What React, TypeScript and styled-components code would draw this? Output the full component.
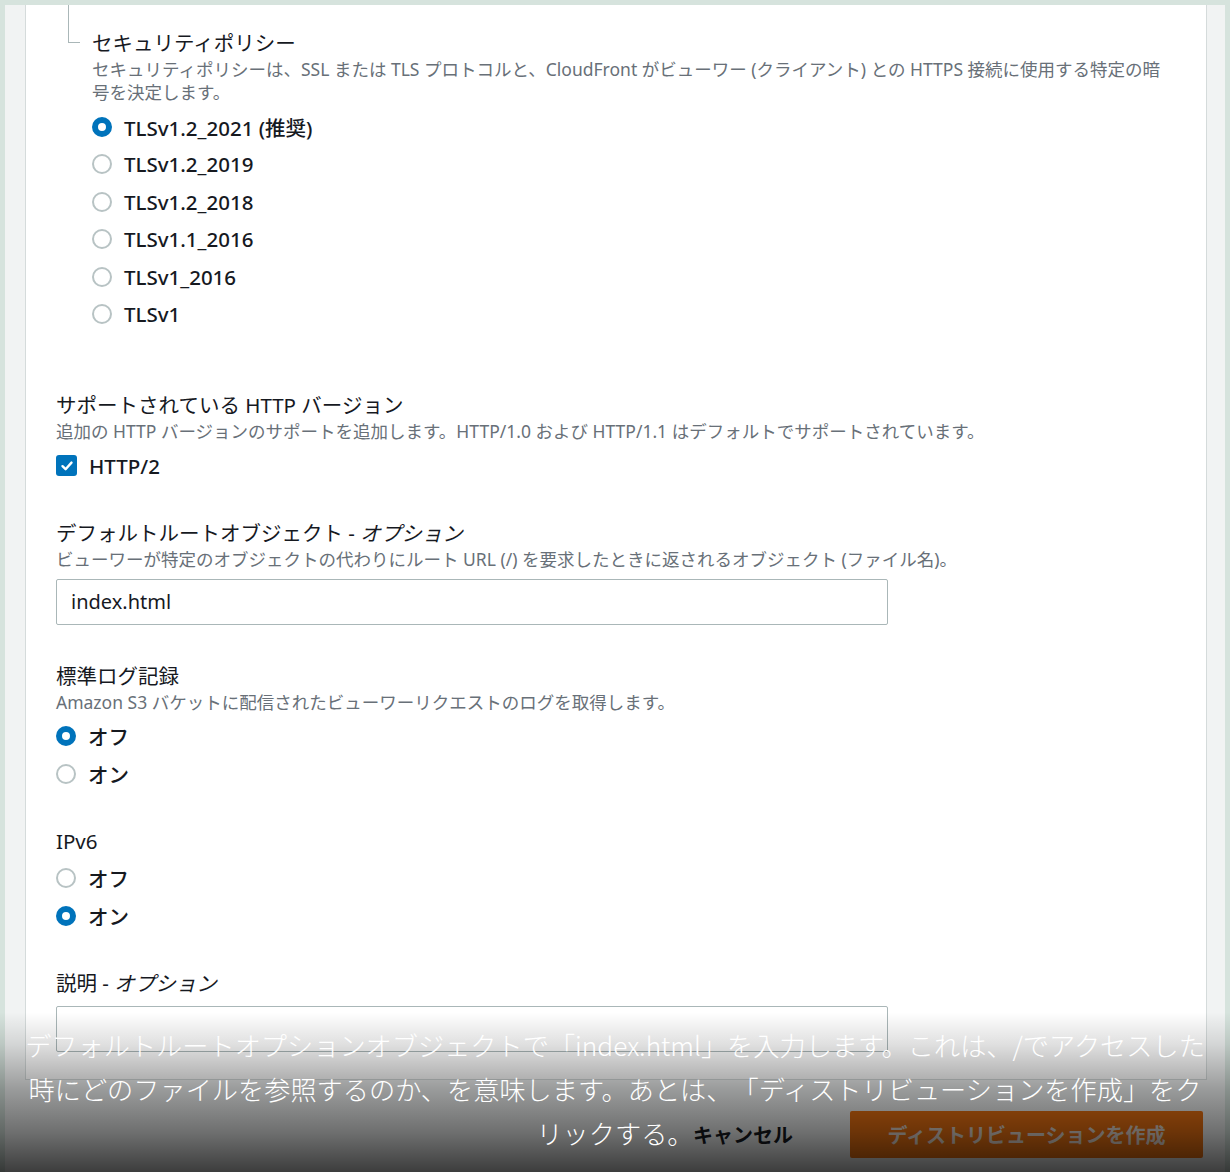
import React from 'react'
import styled, { createGlobalStyle } from 'styled-components'

const GlobalStyle = createGlobalStyle`
  html, body {
    margin: 0;
    padding: 0;
  }
  body {
    font-family: "Noto Sans", "Noto Sans CJK JP", sans-serif;
    color: #16191f;
  }
`

const Screen = styled.div`
  position: relative;
  width: 1230px;
  height: 1172px;
  overflow: hidden;
  box-sizing: border-box;
  padding: 5px 5px 0 5px;
  background: #d6e3dd;
`

const Page = styled.div`
  height: 100%;
  padding: 0 18px 0 20px;
  background: #f1f3f3;
`

const Panel = styled.div`
  display: flex;
  flex-direction: column;
  gap: 34px;
  padding: 0 30px 27px 30px;
  background: #fff;
  border: 1px solid #d5dbdb;
  border-top: none;
`

const PolicyGroup = styled.div`
  display: flex;
  align-items: flex-start;
  padding-bottom: 24px;
`

const Connector = styled.div`
  flex-shrink: 0;
  width: 12px;
  height: 38px;
  margin: 0 12px;
  box-sizing: border-box;
  border-left: 1px solid #aab7b8;
  border-bottom: 1px solid #aab7b8;
`

const PolicyBody = styled.div`
  padding-top: 24px;
`

const Field = styled.div`
  display: flex;
  flex-direction: column;
`

const Label = styled.div`
  font-size: 20.5px;
  line-height: 29px;
  font-weight: 400;
  color: #16191f;
  white-space: nowrap;
  em {
    font-style: italic;
  }
`

const Description = styled.div`
  font-size: 17.5px;
  line-height: 23px;
  color: #687078;
  white-space: nowrap;
`

const Options = styled.div`
  display: flex;
  flex-direction: column;
  margin-top: 4px;
`

const OptionRow = styled.label`
  display: flex;
  align-items: center;
  gap: 12px;
  height: 37.5px;
  font-size: 20.5px;
  font-weight: 500;
  color: #16191f;
`

const RadioDot = styled.span<{ checked?: boolean }>`
  display: inline-block;
  width: 20px;
  height: 20px;
  box-sizing: border-box;
  border-radius: 50%;
  background: #fff;
  border: ${({ checked }) => (checked ? '6px solid #0073bb' : '2px solid #b8c3c4')};
  flex-shrink: 0;
`

const CheckBox = styled.span`
  display: inline-flex;
  align-items: center;
  justify-content: center;
  width: 21px;
  height: 21px;
  border-radius: 3px;
  background: #0073bb;
  flex-shrink: 0;
`

const TextInput = styled.input<{ spaced?: boolean }>`
  width: 832px;
  height: 46px;
  box-sizing: border-box;
  margin-top: 8px;
  margin-bottom: ${({ spaced }) => (spaced ? '3px' : '0')};
  padding: 0 14px;
  border: 1px solid #aab7b8;
  border-radius: 2px;
  font-family: "Noto Sans", "Noto Sans CJK JP", sans-serif;
  font-size: 20px;
  color: #16191f;
  background: #fff;
  outline: none;
`

const Footer = styled.div`
  display: flex;
  justify-content: flex-end;
  align-items: center;
  gap: 57px;
  margin-top: 31px;
  padding-right: 4px;
`

const CancelLink = styled.span`
  font-size: 20px;
  font-weight: 700;
  color: #16191f;
`

const PrimaryButton = styled.button`
  width: 353px;
  height: 47px;
  border: none;
  border-radius: 2px;
  background: #ec7211;
  color: #e9ddd4;
  font-family: "Noto Sans", "Noto Sans CJK JP", sans-serif;
  font-size: 20px;
  font-weight: 700;
`

const CaptionOverlay = styled.div`
  position: absolute;
  left: 0;
  right: 0;
  bottom: 0;
  height: 160px;
  box-sizing: border-box;
  padding-bottom: 17px;
  display: flex;
  flex-direction: column;
  justify-content: flex-end;
  align-items: center;
  background: linear-gradient(
    to bottom,
    rgba(0, 0, 0, 0) 0%,
    rgba(0, 0, 0, 0.12) 20%,
    rgba(0, 0, 0, 0.36) 48%,
    rgba(0, 0, 0, 0.54) 75%,
    rgba(0, 0, 0, 0.75) 100%
  );
`

const CaptionLine = styled.div`
  font-family: "Noto Sans CJK JP", sans-serif;
  font-size: 26.2px;
  font-weight: 300;
  line-height: 44px;
  color: #fff;
  white-space: nowrap;
  text-spacing-trim: space-all;
`

const policies = [
  'TLSv1.2_2021 (推奨)',
  'TLSv1.2_2019',
  'TLSv1.2_2018',
  'TLSv1.1_2016',
  'TLSv1_2016',
  'TLSv1',
]

const Radio = ({ label, checked }: { label: string; checked?: boolean }) => (
  <OptionRow>
    <RadioDot checked={checked} />
    {label}
  </OptionRow>
)

const App: React.FC = () => {
  return (
    <Screen>
      <GlobalStyle />
      <Page>
        <Panel>
          <PolicyGroup>
            <Connector />
            <PolicyBody>
              <Label>セキュリティポリシー</Label>
              <Description>
                セキュリティポリシーは、SSL または TLS プロトコルと、CloudFront がビューワー (クライアント) との HTTPS 接続に使用する特定の暗
                <br />
                号を決定します。
              </Description>
              <Options>
                {policies.map((p, i) => (
                  <Radio key={p} label={p} checked={i === 0} />
                ))}
              </Options>
            </PolicyBody>
          </PolicyGroup>

          <Field>
            <Label>サポートされている HTTP バージョン</Label>
            <Description>
              追加の HTTP バージョンのサポートを追加します。HTTP/1.0 および HTTP/1.1 はデフォルトでサポートされています。
            </Description>
            <Options>
              <OptionRow>
                <CheckBox>
                  <svg width="14" height="14" viewBox="0 0 14 14">
                    <path d="M2.5 7.2 L5.6 10.2 L11.5 3.6" fill="none" stroke="#fff" strokeWidth="2.4" strokeLinecap="round" strokeLinejoin="round" />
                  </svg>
                </CheckBox>
                HTTP/2
              </OptionRow>
            </Options>
          </Field>

          <Field>
            <Label>
              デフォルトルートオブジェクト - <em>オプション</em>
            </Label>
            <Description>
              ビューワーが特定のオブジェクトの代わりにルート URL (/) を要求したときに返されるオブジェクト (ファイル名)。
            </Description>
            <TextInput spaced readOnly defaultValue="index.html" />
          </Field>

          <Field>
            <Label>標準ログ記録</Label>
            <Description>Amazon S3 バケットに配信されたビューワーリクエストのログを取得します。</Description>
            <Options>
              <Radio label="オフ" checked />
              <Radio label="オン" />
            </Options>
          </Field>

          <Field>
            <Label>IPv6</Label>
            <Options>
              <Radio label="オフ" />
              <Radio label="オン" checked />
            </Options>
          </Field>

          <Field>
            <Label>
              説明 - <em>オプション</em>
            </Label>
            <TextInput readOnly defaultValue="" />
          </Field>
        </Panel>

        <Footer>
          <CancelLink>キャンセル</CancelLink>
          <PrimaryButton>ディストリビューションを作成</PrimaryButton>
        </Footer>
      </Page>

      <CaptionOverlay>
        <CaptionLine>デフォルトルートオプションオブジェクトで「index.html」を入力します。これは、/でアクセスした</CaptionLine>
        <CaptionLine>時にどのファイルを参照するのか、を意味します。あとは、「ディストリビューションを作成」をク</CaptionLine>
        <CaptionLine>リックする。</CaptionLine>
      </CaptionOverlay>
    </Screen>
  )
}

export default App
